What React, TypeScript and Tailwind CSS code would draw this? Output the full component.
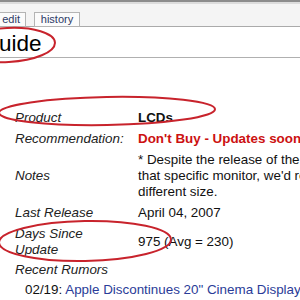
import React from 'react';

// Spec table rows (label column / value column)
const rows = [
  { label: 'Product', value: <span className="font-bold">LCDs</span> },
  { label: 'Recommendation:', value: <span className="font-bold whitespace-nowrap text-[#cc1111]">Don't Buy - Updates soon</span> },
  {
    label: 'Notes',
    value: (
      <span className="block whitespace-nowrap leading-4">
        * Despite the release of the new
        <br />
        that specific monitor, we'd recom
        <br />
        different size.
      </span>
    ),
  },
  { label: 'Last Release', value: 'April 04, 2007' },
  {
    label: (
      <>
        Days Since
        <br />
        Update
      </>
    ),
    value: '975 (Avg = 230)',
  },
];

function Ellipses() {
  return (
    <svg className="absolute left-0 top-0 pointer-events-none" width="300" height="300" viewBox="0 0 300 300">
      <g fill="none" stroke="#c8232c" strokeWidth="2">
        <ellipse cx="8" cy="45" rx="47" ry="17" transform="rotate(-3 8 45)" />
        <ellipse cx="107" cy="111" rx="108" ry="14" transform="rotate(-1 107 111)" />
        <ellipse cx="85" cy="241" rx="86" ry="20" transform="rotate(-1 85 241)" />
      </g>
    </svg>
  );
}

export default function App() {
  return (
    <div
      className="relative w-[300px] h-[300px] overflow-hidden bg-white text-[#111]"
      style={{ fontFamily: '"Liberation Sans", Arial, sans-serif' }}
    >
      {/* top chrome with tabs */}
      <div className="h-[2px] bg-[#8c8c8c]" />
      <div className="h-[2px] bg-[#dcdcdc]" />
      <div className="flex items-end h-[23px] bg-[#f4f4f4] border-b border-[#aaaaaa] gap-2">
        <div className="h-[15px] w-[26px] -mb-px bg-[#fbfbfb] border border-[#b4b4b4] border-l-0 flex items-center justify-end pr-[5px] text-[11px] text-[#2c3a66]">
          edit
        </div>
        <div className="h-[15px] w-[46px] -mb-px bg-[#fbfbfb] border border-[#b4b4b4] flex items-center justify-center text-[11px] text-[#2c3a66]">
          history
        </div>
      </div>

      {/* page title */}
      <div className="h-[31px] border-b border-[#b0b0b0] flex items-end pb-[2px]">
        <h1 className="text-[22.5px] leading-none -ml-[1px] text-black">uide</h1>
      </div>

      {/* spec table */}
      <div className="grid grid-cols-[123px_1fr] items-center pl-[15px] pt-[49px] text-[13.4px] leading-4">
        {rows.map((r, i) => (
          <React.Fragment key={i}>
            <div className="italic text-[#222] py-[2.5px]">{r.label}</div>
            <div className="py-[2.5px] whitespace-nowrap">{r.value}</div>
          </React.Fragment>
        ))}
        <div className="italic text-[#222] py-[2px] col-span-2">Recent Rumors</div>
      </div>

      <div className="pl-[25px] text-[13.4px] leading-4 whitespace-nowrap mt-[2px]">
        <div>
          02/19: <span className="text-[#2a3c98]">Apple Discontinues 20" Cinema Display, Prod</span>
        </div>
        <div>
          01/10: <span className="text-[#2a3c98]">Macworld 2007: Cinema Displays</span>
        </div>
      </div>

      <Ellipses />
    </div>
  );
}
